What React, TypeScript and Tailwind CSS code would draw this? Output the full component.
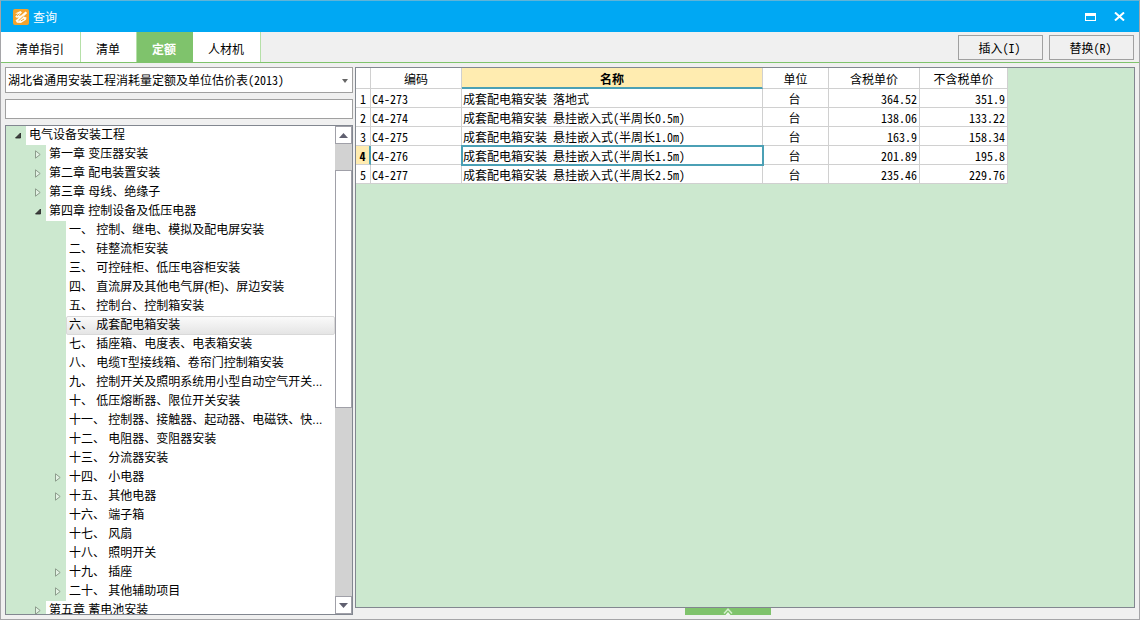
import { useState } from "react";
import clsx from "clsx";

type TreeRow = {
  label: string;
  level: number;
  state?: "open" | "closed";
};

type Quota = {
  code: string;
  name: string;
  unit: string;
  taxPrice: string;
  price: string;
};

const tabs = ["清单指引", "清单", "定额", "人材机"];

const treeRows: TreeRow[] = [
  { label: "电气设备安装工程", level: 0, state: "open" },
  { label: "第一章 变压器安装", level: 1, state: "closed" },
  { label: "第二章 配电装置安装", level: 1, state: "closed" },
  { label: "第三章 母线、绝缘子", level: 1, state: "closed" },
  { label: "第四章 控制设备及低压电器", level: 1, state: "open" },
  { label: "一、 控制、继电、模拟及配电屏安装", level: 2 },
  { label: "二、 硅整流柜安装", level: 2 },
  { label: "三、 可控硅柜、低压电容柜安装", level: 2 },
  { label: "四、 直流屏及其他电气屏(柜)、屏边安装", level: 2 },
  { label: "五、 控制台、控制箱安装", level: 2 },
  { label: "六、 成套配电箱安装", level: 2 },
  { label: "七、 插座箱、电度表、电表箱安装", level: 2 },
  { label: "八、 电缆T型接线箱、卷帘门控制箱安装", level: 2 },
  { label: "九、 控制开关及照明系统用小型自动空气开关...", level: 2 },
  { label: "十、 低压熔断器、限位开关安装", level: 2 },
  { label: "十一、 控制器、接触器、起动器、电磁铁、快...", level: 2 },
  { label: "十二、 电阻器、变阻器安装", level: 2 },
  { label: "十三、 分流器安装", level: 2 },
  { label: "十四、 小电器", level: 2, state: "closed" },
  { label: "十五、 其他电器", level: 2, state: "closed" },
  { label: "十六、 端子箱", level: 2 },
  { label: "十七、 风扇", level: 2 },
  { label: "十八、 照明开关", level: 2 },
  { label: "十九、 插座", level: 2, state: "closed" },
  { label: "二十、 其他辅助项目", level: 2, state: "closed" },
  { label: "第五章 蓄电池安装", level: 1, state: "closed" },
];

const quotas: Quota[] = [
  { code: "C4-273", name: "成套配电箱安装 落地式", unit: "台", taxPrice: "364.52", price: "351.9" },
  { code: "C4-274", name: "成套配电箱安装 悬挂嵌入式(半周长0.5m)", unit: "台", taxPrice: "138.06", price: "133.22" },
  { code: "C4-275", name: "成套配电箱安装 悬挂嵌入式(半周长1.0m)", unit: "台", taxPrice: "163.9", price: "158.34" },
  { code: "C4-276", name: "成套配电箱安装 悬挂嵌入式(半周长1.5m)", unit: "台", taxPrice: "201.89", price: "195.8" },
  { code: "C4-277", name: "成套配电箱安装 悬挂嵌入式(半周长2.5m)", unit: "台", taxPrice: "235.46", price: "229.76" },
];

// width of the green gutter, toggle included
const gutter = ["w-5", "w-10", "w-[60px]"];

function TitleBar() {
  return (
    <header className="flex h-[31px] shrink-0 items-center bg-[#00a8f3] pl-3 pr-[10px] text-white">
      <svg width="16" height="16" viewBox="0 0 16 16" aria-hidden="true">
        <rect width="16" height="16" rx="2" fill="#f5a32c" />
        <path d="M2 4.500 7.500 2 9 3.500 5.500 6.800 8 6.500 12.500 2.500 14.200 4 10.500 7.500 13.500 8.500 13 10.800 8 14 4 13.800 2.500 11.500 6 8.500 3.500 8.800 2.200 7.500 5 4.800z" fill="#fffaf0" />
        <path d="M5.500 11.800 10.500 7.200M8 11.800l3-1.800M4 6.800l2.500-2.300" fill="none" stroke="#f5a32c" strokeWidth="1" />
      </svg>
      <h1 className="ml-1 flex-1 text-xs">查询</h1>
      <button aria-label="最大化" className="p-1">
        <svg width="11" height="8" viewBox="0 0 11 8">
          <path d="M0 0h11v8H0zM1 3v4h9V3z" fill="#fff" fillRule="evenodd" />
        </svg>
      </button>
      <button aria-label="关闭" className="ml-[10px] p-1">
        <svg width="11" height="9" viewBox="0 0 11 9">
          <path d="M1 .5l9 8M10 .5l-9 8" stroke="#fff" strokeWidth="2" />
        </svg>
      </button>
    </header>
  );
}

function Toolbar() {
  const [active, setActive] = useState("定额");
  return (
    <div className="flex h-[31px] shrink-0 items-stretch justify-between border-b border-[#7fc36c]">
      <nav className="flex">
        {tabs.map((tab) => (
          <button
            key={tab}
            onClick={() => setActive(tab)}
            className={clsx(
              "border-r pl-[15px] pr-4 pt-1 text-xs",
              tab === active ? "border-[#7fc36c] bg-[#7fc36c] font-bold text-white" : "border-[#b5e0a8] bg-white"
            )}
          >
            {tab}
          </button>
        ))}
      </nav>
      <div className="flex gap-[6px] pr-[5px] pt-[3px] pb-[2px]">
        <button className="w-[85px] border border-[#a0a0a0] bg-[#f0f0f0] pr-[2px] text-xs [font-feature-settings:'hwid']">插入(I)</button>
        <button className="w-[85px] border border-[#a0a0a0] bg-[#f0f0f0] pr-[2px] text-xs [font-feature-settings:'hwid']">替换(R)</button>
      </div>
    </div>
  );
}

function Toggle({ state }: { state: "open" | "closed" }) {
  return (
    <button aria-label={state === "open" ? "折叠" : "展开"} className="flex h-full w-5 items-center justify-center pl-[3px]">
      <svg width="8" height="9" viewBox="0 0 8 9">
        {state === "open" ? (
          <path d="M6.500 2v5H1.500z" fill="#404040" stroke="#222" strokeWidth=".8" />
        ) : (
          <path d="M1.500 .8v7.400L6.200 4.500z" fill="#e3f2e4" stroke="#8c9c8c" strokeWidth="1" />
        )}
      </svg>
    </button>
  );
}

function ScrollBar() {
  return (
    <div className="flex w-[17px] shrink-0 flex-col bg-[#d2d2d2]">
      <button aria-label="向上滚动" className="flex h-[18px] items-center justify-center border border-[#a0a0a8] bg-white">
        <svg width="9" height="5" viewBox="0 0 9 5"><path d="M4.500 0 9 5H0z" fill="#606070" /></svg>
      </button>
      <div className="flex-[26]" />
      <div className="flex-[238] border border-[#a0a0a8] bg-white" />
      <div className="flex-[189]" />
      <button aria-label="向下滚动" className="flex h-[18px] items-center justify-center border border-[#a0a0a8] bg-white">
        <svg width="9" height="5" viewBox="0 0 9 5"><path d="M4.500 5 9 0H0z" fill="#606070" /></svg>
      </button>
    </div>
  );
}

function ChapterTree() {
  const [selected, setSelected] = useState(10);
  return (
    <div className="mt-[6px] flex min-h-0 flex-1 border border-[#828790] bg-white">
      <ul className="min-w-0 flex-1 overflow-hidden font-['Liberation_Sans','Noto_Sans_CJK_SC',sans-serif]">
        {treeRows.map((row, index) => (
          <li key={row.label} className="flex h-[19px]">
            <div className={clsx("flex shrink-0 justify-end bg-[#cce8cf]", gutter[row.level])}>
              {row.state && <Toggle state={row.state} />}
            </div>
            <button
              onClick={() => setSelected(index)}
              className={clsx(
                "min-w-0 flex-1 truncate rounded-[2px] border pl-[2px] text-left text-xs leading-[17px]",
                index === selected ? "border-[#d9d9d9] bg-linear-to-b from-[#fafafa] to-[#e5e5e5]" : "border-transparent"
              )}
            >
              {row.label}
            </button>
          </li>
        ))}
      </ul>
      <ScrollBar />
    </div>
  );
}

function SidePanel() {
  return (
    <aside className="flex w-[348px] shrink-0 flex-col">
      <div className="relative">
        <select
          aria-label="定额库"
          className="block h-[26px] w-full appearance-none border border-[#a0a0a0] bg-white pl-[2px] pr-5 text-xs [font-feature-settings:'hwid']"
        >
          <option>湖北省通用安装工程消耗量定额及单位估价表(2013)</option>
        </select>
        <svg width="6" height="4" viewBox="0 0 6 4" className="pointer-events-none absolute right-[5px] top-3">
          <path d="M0 0h6L3 4z" fill="#666" />
        </svg>
      </div>
      <input aria-label="搜索" type="text" className="mt-[6px] h-5 w-full border border-[#a0a0a0] bg-white px-1 text-xs" />
      <ChapterTree />
    </aside>
  );
}

function QuotaTable() {
  const [current, setCurrent] = useState(3);
  const head = "h-[21px] border-b border-r border-[#d0d0d0] bg-white px-0 pt-[2px] pb-0 font-normal leading-[18px]";
  const cell = "h-[19px] border-b border-r border-[#d0d0d0] bg-white pt-[2px] pb-0 leading-[16px] whitespace-nowrap";
  return (
    <table className="w-[652px] table-fixed border-separate border-spacing-0 text-xs [font-feature-settings:'hwid']">
      <colgroup>
        <col className="w-[15px]" />
        <col className="w-[91px]" />
        <col className="w-[301px]" />
        <col className="w-[66px]" />
        <col className="w-[91px]" />
        <col className="w-[88px]" />
      </colgroup>
      <thead>
        <tr>
          <th className={head}></th>
          <th className={head}>编码</th>
          <th className="h-[21px] border-b-2 border-r border-b-[#4ba0b5] border-r-[#d0d0d0] bg-[#ffecb0] px-0 pt-[2px] pb-0 font-bold leading-[17px]">名称</th>
          <th className={head}>单位</th>
          <th className={head}>含税单价</th>
          <th className={head}>不含税单价</th>
        </tr>
      </thead>
      <tbody>
        {quotas.map((item, index) => (
          <tr key={item.code} onClick={() => setCurrent(index)}>
            <td
              className={clsx(
                "h-[19px] border-b border-b-[#d0d0d0] px-0 pt-[2px] pb-0 text-center leading-[16px]",
                index === current ? "border-r-2 border-r-[#4ba0b5] bg-[#ffecb0] font-bold" : "border-r border-r-[#d0d0d0] bg-white"
              )}
            >
              {index + 1}
            </td>
            <td className={clsx(cell, "px-px")}>{item.code}</td>
            <td className={clsx(cell, "px-px", index === current && "outline-2 -outline-offset-1 outline-[#4ba0b5]")}>{item.name}</td>
            <td className={clsx(cell, "pr-[2px] pl-0 text-center")}>{item.unit}</td>
            <td className={clsx(cell, "px-[2px] text-right")}>{item.taxPrice}</td>
            <td className={clsx(cell, "px-[2px] text-right")}>{item.price}</td>
          </tr>
        ))}
      </tbody>
    </table>
  );
}

export default function App() {
  return (
    <div className="flex h-screen flex-col overflow-hidden border border-[#a5a5a8] border-t-[#5fb4d8] bg-[#f0f0f0] font-['Noto_Sans_CJK_SC',sans-serif] text-black">
      <TitleBar />
      <Toolbar />
      <div className="flex min-h-0 flex-1 gap-[2px] p-1">
        <SidePanel />
        <main className="flex min-w-0 flex-1 flex-col">
          <div className="min-h-0 flex-1 overflow-hidden border border-[#828790] bg-[#cce8cf]">
            <QuotaTable />
          </div>
          <button aria-label="展开明细" className="ml-[330px] flex h-[7px] w-[86px] items-center justify-center bg-[#7fc36c]">
            <svg width="10" height="7" viewBox="0 0 10 7">
              <path d="M1 5.500 5 1.200 9 5.500" fill="none" stroke="#d3efcb" strokeWidth="1.500" />
              <path d="M2.500 7 5 4l2.500 3z" fill="#eefaea" />
            </svg>
          </button>
        </main>
      </div>
    </div>
  );
}
